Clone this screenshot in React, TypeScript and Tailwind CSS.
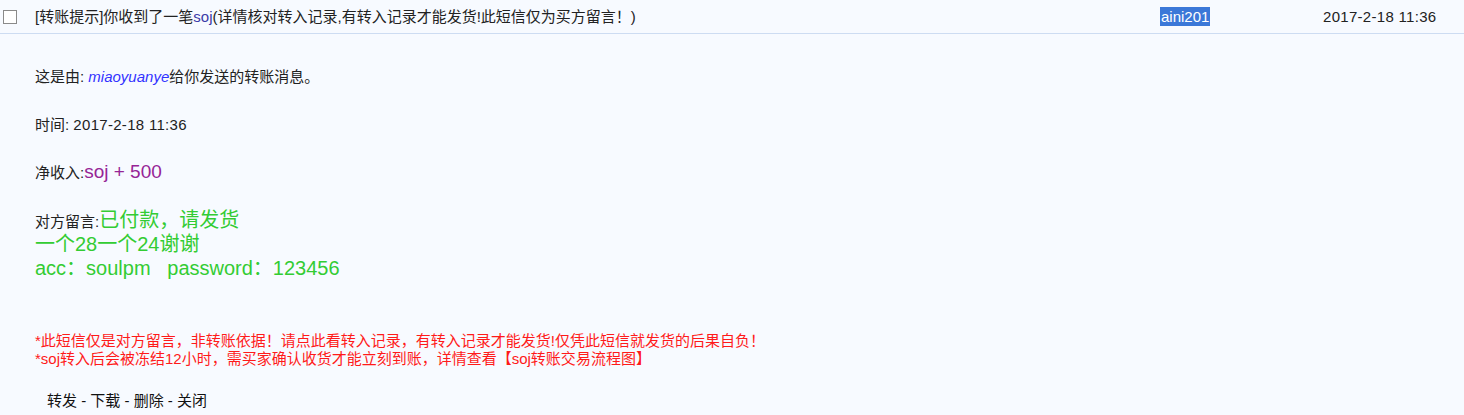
import React from "react";

export default function App() {
  const font = { fontFamily: '"Liberation Sans", "Noto Sans CJK SC", sans-serif' };
  return (
    <div
      className="w-[1464px] h-[415px] bg-[#f7faff] text-[#222] text-[15px] overflow-hidden [font-family:'Liberation_Sans','Noto_Sans_CJK_SC',sans-serif]"
      style={font}
    >
      {/* header row */}
      <div className="flex items-center h-[34px] border-b border-[#cddcf2]">
        <div className="w-[35px] pl-[3px] flex items-center">
          <div className="w-[14px] h-[14px] border border-[#8a8a8a] bg-white" />
        </div>
        <div className="flex-1 leading-[18px] whitespace-nowrap">
          [转账提示]你收到了一笔<span className="text-[#3b3ba8]">soj</span>(详情核对转入记录,有转入记录才能发货!此短信仅为买方留言！)
        </div>
        <div className="w-[163px] leading-[18px]">
          <span className="bg-[#3b78d8] text-white px-[1px] py-[1px]">aini201</span>
        </div>
        <div className="w-[141px] leading-[18px] tracking-[0.3px]">2017-2-18 11:36</div>
      </div>

      {/* body */}
      <div className="pl-[35px]">
        <div className="mt-[34px] leading-[18px]">
          这是由: <span className="italic text-[#3333ff]">miaoyuanye</span>给你发送的转账消息。
        </div>
        <div className="mt-[30px] leading-[18px]">
          时间: <span className="tracking-[0.3px]">2017-2-18 11:36</span>
        </div>
        <div className="mt-[26px] leading-[24px]">
          净收入:<span className="text-[19px] text-[#962496]">soj + 500</span>
        </div>
        <div className="mt-[24px] leading-[23px]">
          对方留言:<span className="text-[20px] text-[#33cc33]">已付款，请发货</span>
          <br />
          <span className="text-[20px] text-[#33cc33]">一个28一个24谢谢</span>
          <br />
          <span className="text-[20px] text-[#33cc33] whitespace-pre">acc：soulpm   password：123456</span>
        </div>
        <div className="mt-[51px] leading-[18px] text-[#ff1a1a]">
          <div>*此短信仅是对方留言，非转账依据！请点此看转入记录，有转入记录才能发货!仅凭此短信就发货的后果自负！</div>
          <div>*soj转入后会被冻结12小时，需买家确认收货才能立刻到账，详情查看【soj转账交易流程图】</div>
        </div>
        <div className="mt-[24px] leading-[18px] pl-[12px] text-[#111]">
          转发 - 下载 - 删除 - 关闭
        </div>
      </div>
    </div>
  );
}
